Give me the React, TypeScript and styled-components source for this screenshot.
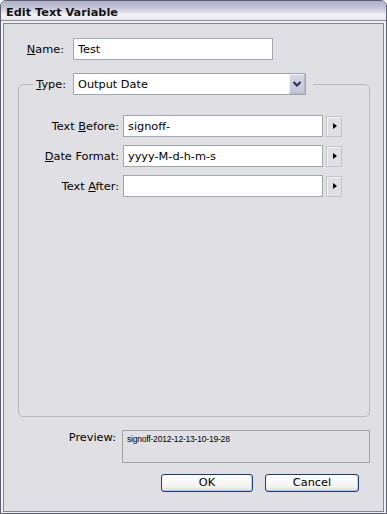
import React from 'react';
import styled, {createGlobalStyle} from 'styled-components';

const GlobalStyle = createGlobalStyle`
  html, body {
    margin: 0;
    padding: 0;
  }
  body {
    width: 387px;
    height: 514px;
    overflow: hidden;
    background: #fff;
  }
  * {
    box-sizing: border-box;
  }
`

type FieldPropsType = {
    label: React.ReactNode
    value: string
}

const Field = (props: FieldPropsType) => {
    return (
        <Row>
            <Label $width={86}>{props.label}</Label>
            <TextInput readOnly value={props.value}/>
            <InsertButton aria-label="Insert"><Triangle/></InsertButton>
        </Row>
    );
};

export default function App() {
    return (
        <>
            <GlobalStyle/>
            <Window>
                <TitleBar>Edit Text Variable</TitleBar>
                <Body>
                    <Row $gap={9}>
                        <Label $width={46}><u>N</u>ame:</Label>
                        <TextInput readOnly value="Test"/>
                    </Row>
                    <Group>
                        <Legend>
                            <Row $gap={7}>
                                <Label $width={31}><u>T</u>ype:</Label>
                                <Select>
                                    <SelectText>Output Date</SelectText>
                                    <DropButton>
                                        <svg width="10" height="8" viewBox="0 0 10 8">
                                            <polyline points="1.5,2 5,5.5 8.5,2" fill="none" stroke="#2e2e48" strokeWidth="2"/>
                                        </svg>
                                    </DropButton>
                                </Select>
                            </Row>
                        </Legend>
                        <Field label={<>Text <u>B</u>efore:</>} value="signoff-"/>
                        <Field label={<><u>D</u>ate Format:</>} value="yyyy-M-d-h-m-s"/>
                        <Field label={<>Text <u>A</u>fter:</>} value=""/>
                    </Group>
                    <PreviewRow>
                        <PreviewLabel>Preview:</PreviewLabel>
                        <PreviewBox>signoff-2012-12-13-10-19-28</PreviewBox>
                    </PreviewRow>
                    <ButtonRow>
                        <DialogButton $width={92}>OK</DialogButton>
                        <DialogButton $width={94}>Cancel</DialogButton>
                    </ButtonRow>
                </Body>
            </Window>
        </>
    );
}

const Window = styled.div`
  width: 387px;
  height: 514px;
  display: flex;
  flex-direction: column;
  border: 1px solid #5e5e6e;
  border-radius: 6px 6px 0 0;
  background: #f2f2f6;
  padding: 0 2px 1px;
  font-family: "DejaVu Sans", Tahoma, sans-serif;
  font-size: 11.3px;
  color: #000;
`
const TitleBar = styled.div`
  height: 20px;
  margin: 0 -2px;
  padding: 5px 0 0 5px;
  line-height: 13px;
  border-bottom: 1px solid #8a8a9c;
  border-radius: 5px 5px 0 0;
  background: linear-gradient(#aeaec8 0%, #c4c4da 35%, #f4f4f8 75%, #e4e4ec 100%);
  font-weight: bold;
  color: #111;
`
const Body = styled.div`
  flex: 1;
  min-height: 0;
  margin-top: 2px;
  border: 1px solid #86868f;
  background: #e0dfe3;
  display: flex;
  flex-direction: column;
  padding: 14px 13px 19px 14px;
`
const Row = styled.div<{$gap?: number}>`
  display: flex;
  align-items: center;
  gap: ${props => props.$gap ?? 4}px;
`
const Label = styled.label<{$width: number}>`
  width: ${props => props.$width}px;
  flex-shrink: 0;
  text-align: right;
  white-space: nowrap;
`
const TextInput = styled.input`
  width: 200px;
  height: 22px;
  padding: 0 4px;
  border: 1px solid #a2a8b0;
  background: #fff;
  font: inherit;
  color: #000;
  outline: none;
`
const InsertButton = styled.button`
  width: 16px;
  height: 21px;
  padding: 0 0 0 1px;
  margin-left: -1px;
  border: 1px solid #c4c4c8;
  box-shadow: inset 1px 1px 0 #f6f6f8;
  background: #e0dfe3;
  display: flex;
  align-items: center;
  justify-content: center;
`
const Triangle = styled.span`
  width: 0;
  height: 0;
  border-left: 4px solid #000;
  border-top: 3px solid transparent;
  border-bottom: 3px solid transparent;
`
const Group = styled.fieldset`
  flex: 1;
  min-height: 0;
  min-inline-size: 0;
  margin: 13px 0 0;
  padding: 20px 0 0 14px;
  border: 1px solid #b8b8be;
  border-radius: 5px;
  display: flex;
  flex-direction: column;
  gap: 8px;
`
const Legend = styled.legend`
  padding: 0 7px 0 2px;
`
const Select = styled.div`
  width: 233px;
  height: 22px;
  border: 1px solid #a2a8b0;
  background: #fff;
  display: flex;
  align-items: stretch;
  padding-left: 4px;
`
const SelectText = styled.span`
  flex: 1;
  display: flex;
  align-items: center;
`
const DropButton = styled.span`
  width: 16px;
  border: 1px solid #f2f2f8;
  border-right-color: #b4b4c4;
  border-bottom-color: #b4b4c4;
  background: linear-gradient(#d6d6e4, #c4c6d8);
  display: flex;
  align-items: center;
  justify-content: center;
`
const PreviewRow = styled.div`
  display: flex;
  gap: 6px;
  margin-top: 13px;
`
const PreviewLabel = styled.span`
  width: 98px;
  text-align: right;
  padding-top: 1px;
  line-height: 13px;
`
const PreviewBox = styled.div`
  flex: 1;
  height: 33px;
  border: 1px solid #a4a4a8;
  padding: 3px 4px;
  font-family: "Liberation Sans", Arial, sans-serif;
  font-size: 8.5px;
  letter-spacing: -0.2px;
  line-height: 10px;
`
const ButtonRow = styled.div`
  display: flex;
  justify-content: flex-end;
  gap: 12px;
  margin-top: 11px;
  padding-right: 11px;
`
const DialogButton = styled.button<{$width: number}>`
  width: ${props => props.$width}px;
  height: 18px;
  padding: 0;
  border: 1px solid #1e3c74;
  border-radius: 3px;
  background: linear-gradient(#ffffff, #f2f2ee 75%, #dcd8ce);
  box-shadow: inset 0 -1px 0 #b8c8e6, inset -1px 0 0 #c8d4ec;
  font: inherit;
  color: #000;
  line-height: 14px;
`
